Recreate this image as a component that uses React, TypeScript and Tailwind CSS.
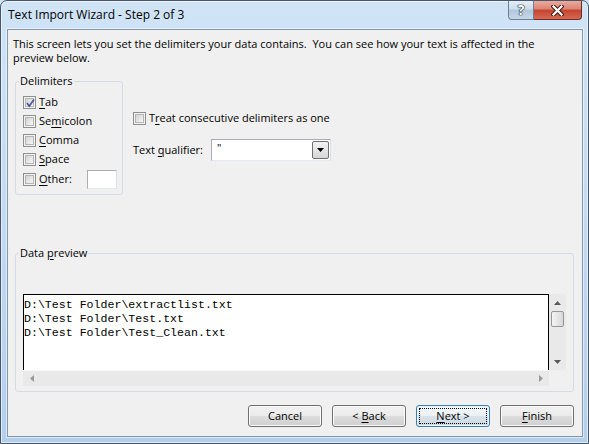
import type { ReactNode } from 'react';

function Box({ checked }: { checked?: boolean }) {
  return (
    <span className="flex h-[13px] w-[13px] shrink-0 items-center justify-center border border-[#8e8f8f] bg-[#f4f4f4]">
      <span className="relative flex h-[9px] w-[9px] items-center justify-center border border-[#b4b4b4] bg-gradient-to-br from-[#d3d3d3] to-[#f7f7f7]">
        {checked && (
          <svg width="11" height="10" viewBox="0 0 11 10" className="absolute -left-[1px] -top-[1px]">
            <path d="M2 5 L4.3 8 L9 1.5" fill="none" stroke="#47599a" strokeWidth="1.7" />
          </svg>
        )}
      </span>
    </span>
  );
}

function Key({ children }: { children: ReactNode }) {
  return <u className="underline-offset-[2px]">{children}</u>;
}

function Row({ checked, children, tall }: { checked?: boolean; children: ReactNode; tall?: boolean }) {
  return (
    <div className={tall ? 'flex h-[21px] items-center gap-[3px] pl-[7px]' : 'flex h-[19px] items-center gap-[3px] pl-[7px]'}>
      <Box checked={checked} />
      {children}
    </div>
  );
}

function Arrow({ dir, color }: { dir: 'up' | 'down' | 'left' | 'right'; color: string }) {
  const pts = {
    up: '0,4 7,4 3.5,0',
    down: '0,0 7,0 3.5,4',
    left: '4,0 4,7 0,3.5',
    right: '0,0 0,7 4,3.5',
  }[dir];
  const vertical = dir === 'up' || dir === 'down';
  return (
    <svg width={vertical ? 7 : 4} height={vertical ? 4 : 7} viewBox={vertical ? '0 0 7 4' : '0 0 4 7'}>
      <polygon points={pts} fill={color} />
    </svg>
  );
}

const btn =
  'flex h-[22px] w-[74px] items-center justify-center rounded-[3px] border border-[#707070] bg-[linear-gradient(to_bottom,#f2f2f2_0%,#ebebeb_50%,#dddddd_51%,#cfcfcf_100%)] shadow-[inset_0_0_0_1px_#fbfbfb]';

export default function App() {
  return (
    <div className="h-[444px] w-[589px] overflow-hidden bg-[#d3e3f2] font-['Open_Sans',sans-serif] text-[11px] text-black">
      <div className="flex h-full w-full flex-col rounded-t-[7px] border border-[#45566c] bg-gradient-to-b from-[#d0e4f6] via-[#c2daf2] to-[#b4cfeb] shadow-[inset_0_0_0_1px_rgba(255,255,255,0.6)]">
        <div className="flex h-[28px] shrink-0 items-start justify-between">
          <span className="pl-[7px] pt-[5px] text-[12px] leading-[18px]">Text Import Wizard - Step 2 of 3</span>
          <div className="mr-[6px] flex">
            <div className="flex h-[19px] w-[26px] items-center justify-center rounded-bl-[4px] border border-t-0 border-[#6b7f98] bg-[linear-gradient(to_bottom,#e6eef7_0%,#cddbeb_45%,#b2c6dc_50%,#c6d7ea_100%)]">
              <span className="text-[14px] font-bold leading-none text-white [text-shadow:0_0_1px_#1d2c3f,0_0_1px_#1d2c3f,0_0_1px_#1d2c3f,0_0_1px_#1d2c3f]">
                ?
              </span>
            </div>
            <div className="flex h-[19px] w-[48px] items-center justify-center rounded-br-[4px] border border-l-0 border-t-0 border-[#6e2a23] bg-[linear-gradient(to_bottom,#eaaa9c_0%,#da8573_45%,#c4432f_50%,#d66a52_100%)]">
              <svg width="13" height="11" viewBox="0 0 13 11">
                <path d="M2.5 1.5 L10.5 9.5 M10.5 1.5 L2.5 9.5" stroke="#3b1a16" strokeWidth="4.2" strokeLinecap="square" />
                <path d="M2.5 1.5 L10.5 9.5 M10.5 1.5 L2.5 9.5" stroke="#ffffff" strokeWidth="2.2" strokeLinecap="square" />
              </svg>
            </div>
          </div>
        </div>

        <div className="ml-[6px] flex h-[408px] w-[576px] flex-col border border-[#8397ad] bg-[#f0f0f0] shadow-[0_0_0_1px_rgba(255,255,255,0.5)]">
          <p className="px-[5px] pt-[7px] leading-[14px]">
            This screen lets you set the delimiters your data contains.{'\u00a0 '}You can see how your text is affected in the
            <br />
            preview below.
          </p>

          <div className="mt-[9px] flex items-start">
            <fieldset className="ml-[7px] w-[108px] rounded-[3px] border border-[#d5dbe0] pb-[4px]">
              <legend className="ml-[3px] px-[1px] leading-[14px]">Delimiters</legend>
              <div className="pt-[5px]">
                <Row checked>
                  <span>
                    <Key>T</Key>ab
                  </span>
                </Row>
                <Row>
                  <span>
                    Se<Key>m</Key>icolon
                  </span>
                </Row>
                <Row>
                  <span>
                    <Key>C</Key>omma
                  </span>
                </Row>
                <Row>
                  <span>
                    <Key>S</Key>pace
                  </span>
                </Row>
                <Row tall>
                  <span className="w-[45px]">
                    <Key>O</Key>ther:
                  </span>
                  <span className="h-[19px] w-[30px] border border-[#abadb3] border-b-[#e3e9ef] border-r-[#dbdfe6] bg-white" />
                </Row>
              </div>
            </fieldset>

            <div className="ml-[10px] flex flex-col pt-[35px]">
              <div className="flex h-[19px] items-center gap-[3px]">
                <Box />
                <span>
                  T<Key>r</Key>eat consecutive delimiters as one
                </span>
              </div>
              <div className="mt-[11px] flex h-[22px] items-center">
                <span className="w-[78px]">
                  Text <Key>q</Key>ualifier:
                </span>
                <div className="flex h-[22px] w-[120px] border border-[#abadb3] border-b-[#e3e9ef] border-r-[#dbdfe6] bg-white p-[1px]">
                  <span className="flex-1 pl-[4px] leading-[14px]">"</span>
                  <span className="flex w-[17px] items-center justify-center rounded-[2px] border border-[#707070] bg-gradient-to-b from-[#f3f3f3] to-[#d6d6d6]">
                    <Arrow dir="down" color="#000" />
                  </span>
                </div>
              </div>
            </div>
          </div>

          <fieldset className="ml-[7px] mt-[51px] w-[559px] rounded-[3px] border border-[#d5dbe0] pb-[5px]">
            <legend className="ml-[3px] px-[1px] leading-[14px]">
              Data <Key>p</Key>review
            </legend>
            <div className="ml-[7px] mt-[34px] grid w-[543px] grid-cols-[526px_17px] grid-rows-[76px_16px]">
              <div className="overflow-hidden border-l border-r border-t border-black bg-white pt-[3px] font-['Liberation_Mono',monospace] text-[11.6px] leading-[14px] whitespace-pre">
                <div>D:\Test Folder\extractlist.txt</div>
                <div>D:\Test Folder\Test.txt</div>
                <div>D:\Test Folder\Test_Clean.txt</div>
              </div>
              <div className="flex flex-col bg-[#e9e9e9]">
                <div className="flex h-[17px] items-center justify-center">
                  <Arrow dir="up" color="#5a5a5a" />
                </div>
                <div className="mx-[2px] h-[16px] rounded-[2px] border border-[#979797] bg-gradient-to-r from-[#f4f4f4] to-[#d8d8d8]" />
                <div className="flex-1" />
                <div className="flex h-[17px] items-center justify-center">
                  <Arrow dir="down" color="#5a5a5a" />
                </div>
              </div>
              <div className="flex items-center justify-between border-t border-[#f8f8f8] bg-[#e9e9e9]">
                <div className="flex w-[17px] justify-center">
                  <Arrow dir="left" color="#9a9a9a" />
                </div>
                <div className="flex w-[17px] justify-center">
                  <Arrow dir="right" color="#9a9a9a" />
                </div>
              </div>
              <div className="bg-[#f0f0f0]" />
            </div>
          </fieldset>

          <div className="mt-[13px] flex justify-end gap-[10px] pr-[8px]">
            <button type="button" className={btn}>
              <span>Cancel</span>
            </button>
            <button type="button" className={btn}>
              <span>
                &lt;&nbsp;<Key>B</Key>ack
              </span>
            </button>
            <button
              type="button"
              className="flex h-[22px] w-[74px] items-center justify-center rounded-[3px] border border-[#3c7fb1] bg-[linear-gradient(to_bottom,#f3f8fb_0%,#eaf0f4_50%,#dae3ea_51%,#ccd8e2_100%)] shadow-[inset_0_0_0_1px_#e6f4fc]"
            >
              <span className="flex h-[16px] w-[68px] items-center justify-center border border-dotted border-black">
                <span>
                  <Key>N</Key>ext&nbsp;&gt;
                </span>
              </span>
            </button>
            <button type="button" className={btn}>
              <span>
                <Key>F</Key>inish
              </span>
            </button>
          </div>
        </div>
      </div>
    </div>
  );
}
